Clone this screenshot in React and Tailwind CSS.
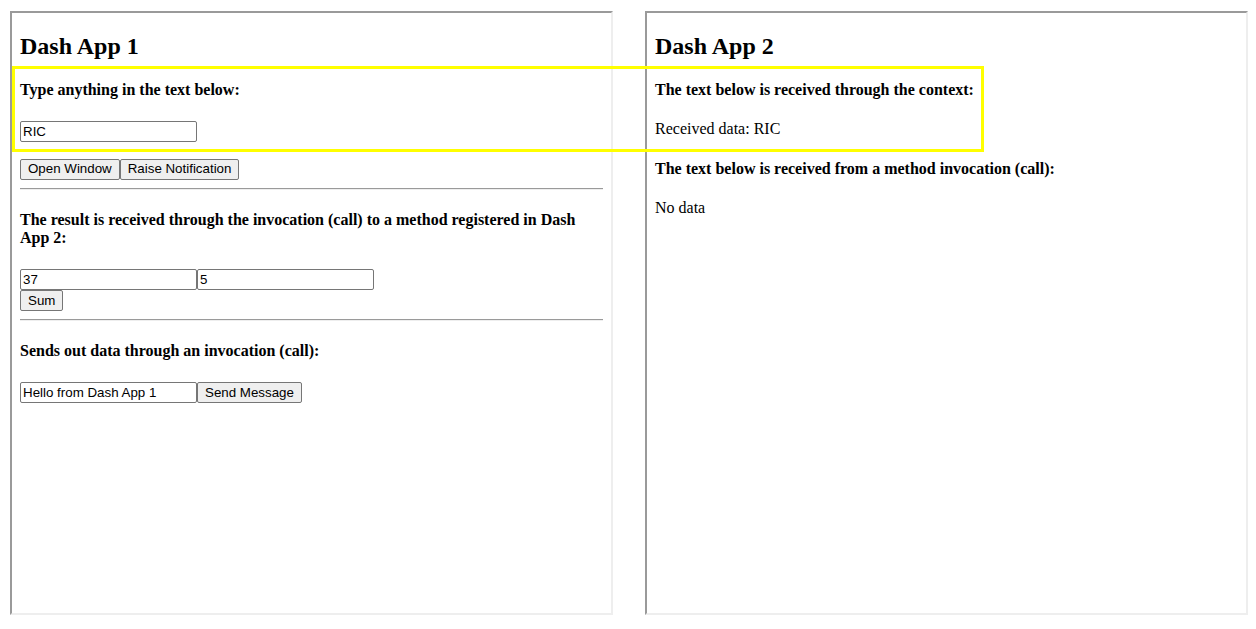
import React, { useState } from 'react';

const frameCls = "w-[603px] h-[604px] shrink-0 border-2 border-t-[#9a9a9a] border-l-[#9a9a9a] border-r-[#eeeeee] border-b-[#eeeeee] px-[8px] overflow-hidden bg-white text-black font-['Liberation_Serif','Times_New_Roman',serif]";
const h2Cls = "text-[24px] font-bold leading-[26.6px] mt-[20px] mb-[20px]";
const h4Cls = "text-[16px] font-bold leading-[18.4px] my-[21.28px]";
const inputCls = "w-[177px] h-[21px] px-[2px] border border-[#767676] rounded-[2px] bg-white text-black text-[13.33px] font-['Liberation_Sans',Arial,sans-serif] outline-none";
const btnCls = "h-[21px] px-[7px] border border-[#767676] rounded-[2px] bg-[#efefef] text-black text-[13.33px] leading-none font-['Liberation_Sans',Arial,sans-serif] whitespace-nowrap";
const hrCls = "my-[8px] h-0 border-t border-b border-t-[#9a9a9a] border-b-[#eeeeee]";

const DashApp1 = ({ text, setText }) => {
    const [a, setA] = useState('37');
    const [b, setB] = useState('5');
    const [msg, setMsg] = useState('Hello from Dash App 1');

    return (
        <div className={frameCls}>
            <h2 className={h2Cls}>Dash App 1</h2>
            <h4 className={h4Cls}>Type anything in the text below:</h4>
            <input className={`${inputCls} block mb-[17px]`} value={text} onChange={(e) => setText(e.target.value)} />
            <div className="flex">
                <button className={btnCls}>Open Window</button>
                <button className={btnCls}>Raise Notification</button>
            </div>
            <hr className={hrCls} />
            <h4 className={h4Cls}>The result is received through the invocation (call) to a method registered in Dash App 2:</h4>
            <div className="flex">
                <input className={inputCls} value={a} onChange={(e) => setA(e.target.value)} />
                <input className={inputCls} value={b} onChange={(e) => setB(e.target.value)} />
            </div>
            <div className="flex">
                <button className={btnCls}>Sum</button>
            </div>
            <hr className={hrCls} />
            <h4 className={h4Cls}>Sends out data through an invocation (call):</h4>
            <div className="flex">
                <input className={inputCls} value={msg} onChange={(e) => setMsg(e.target.value)} />
                <button className={btnCls}>Send Message</button>
            </div>
        </div>
    );
};

const DashApp2 = ({ text }) => (
    <div className={frameCls}>
        <h2 className={h2Cls}>Dash App 2</h2>
        <h4 className={h4Cls}>The text below is received through the context:</h4>
        <div className="text-[16px] leading-[18.4px] -mt-px pb-px">Received data: {text}</div>
        <h4 className={h4Cls}>The text below is received from a method invocation (call):</h4>
        <div className="text-[16px] leading-[18.4px] -mt-px pb-px">No data</div>
    </div>
);

const App = () => {
    const [text, setText] = useState('RIC');

    return (
        <div className="relative w-[1256px] h-[629px] bg-white flex items-start gap-[32px] pl-[10px] pt-[11px]">
            <DashApp1 text={text} setText={setText} />
            <DashApp2 text={text} />
            {/* highlight over the context-sharing part */}
            <div className="absolute left-[12px] top-[66px] w-[972px] h-[86px] border-[3px] border-[#ffff00] pointer-events-none" />
        </div>
    );
};

export default App;
